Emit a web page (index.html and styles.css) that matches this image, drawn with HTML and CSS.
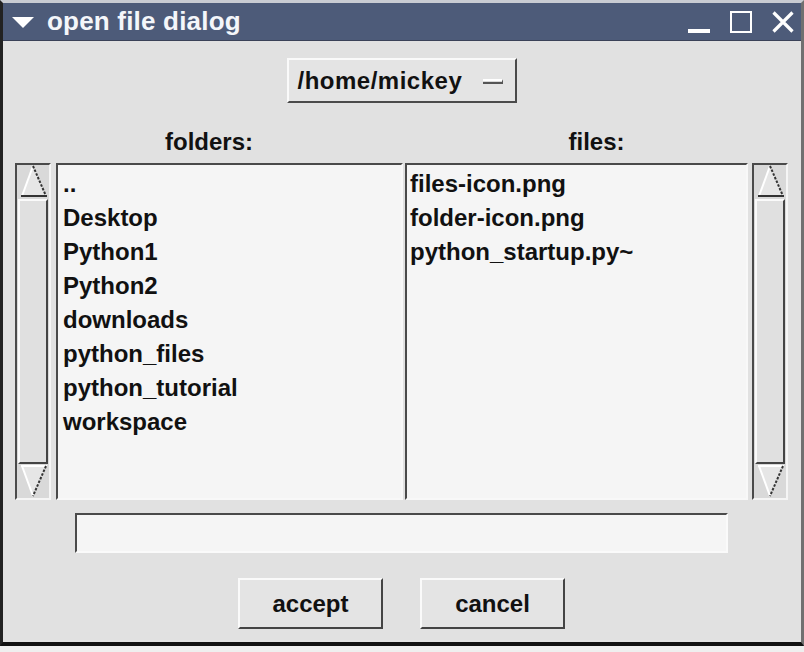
FILE: index.html
```html
<!DOCTYPE html>
<html lang="en">
  <head>
    <meta charset="UTF-8" />
    <title>open file dialog</title>
    <link rel="stylesheet" href="styles.css">
  </head>
  <body>
    <div class="window">
      <div class="titlebar">
        <svg class="menu-tri" width="22" height="12" viewBox="0 0 22 12">
          <polygon points="0,0 22,0 11,11" fill="#fff" />
        </svg>
        <div class="title">open file dialog</div>
        <div class="wbtns">
          <svg width="22" height="22" viewBox="0 0 22 22">
            <rect x="0" y="18" width="22" height="4" fill="#fff" />
          </svg>
          <svg width="22" height="22" viewBox="0 0 22 22">
            <rect x="1" y="1" width="20" height="20" fill="none" stroke="#fff" stroke-width="2" />
          </svg>
          <svg width="22" height="22" viewBox="0 0 22 22">
            <path d="M1.5 1.5 L20.5 20.5 M20.5 1.5 L1.5 20.5" stroke="#fff" stroke-width="3.2" />
          </svg>
        </div>
      </div>

      <div class="content">
        <div class="dropdown">
          <span class="path">/home/mickey</span>
          <span class="indicator"></span>
        </div>

        <div class="cols">
          <div class="label">folders:</div>
          <div class="label">files:</div>

          <div class="pane">
            <div class="scrollbar">
              <svg class="arrow" width="32" height="34" viewBox="0 0 32 34">
                <polygon points="16,1 5,31 29,31" fill="#e6e6e6" />
                <line x1="16" y1="1" x2="5" y2="31" stroke="#fff" stroke-width="2" />
                <line x1="16" y1="1" x2="29" y2="31" stroke="#333" stroke-width="2" stroke-dasharray="2.5 1.5" />
                <line x1="4" y1="31" x2="30" y2="31" stroke="#333" stroke-width="2" />
              </svg>
              <div class="thumb"></div>
              <svg class="arrow" width="32" height="34" viewBox="0 0 32 34">
                <polygon points="5,2 29,2 16,32" fill="#e6e6e6" />
                <line x1="4" y1="2" x2="30" y2="2" stroke="#fff" stroke-width="2" />
                <line x1="5" y1="2" x2="16" y2="32" stroke="#fff" stroke-width="2" />
                <line x1="29" y1="2" x2="16" y2="32" stroke="#333" stroke-width="2" stroke-dasharray="2.5 1.5" />
              </svg>
            </div>
            <div class="listbox">
              <div class="item">..</div>
              <div class="item">Desktop</div>
              <div class="item">Python1</div>
              <div class="item">Python2</div>
              <div class="item">downloads</div>
              <div class="item">python_files</div>
              <div class="item">python_tutorial</div>
              <div class="item">workspace</div>
            </div>
          </div>

          <div class="pane right">
            <div class="listbox">
              <div class="item">files-icon.png</div>
              <div class="item">folder-icon.png</div>
              <div class="item">python_startup.py~</div>
            </div>
            <div class="scrollbar">
              <svg class="arrow" width="32" height="34" viewBox="0 0 32 34">
                <polygon points="16,1 5,31 29,31" fill="#e6e6e6" />
                <line x1="16" y1="1" x2="5" y2="31" stroke="#fff" stroke-width="2" />
                <line x1="16" y1="1" x2="29" y2="31" stroke="#333" stroke-width="2" stroke-dasharray="2.5 1.5" />
                <line x1="4" y1="31" x2="30" y2="31" stroke="#333" stroke-width="2" />
              </svg>
              <div class="thumb"></div>
              <svg class="arrow" width="32" height="34" viewBox="0 0 32 34">
                <polygon points="5,2 29,2 16,32" fill="#e6e6e6" />
                <line x1="4" y1="2" x2="30" y2="2" stroke="#fff" stroke-width="2" />
                <line x1="5" y1="2" x2="16" y2="32" stroke="#fff" stroke-width="2" />
                <line x1="29" y1="2" x2="16" y2="32" stroke="#333" stroke-width="2" stroke-dasharray="2.5 1.5" />
              </svg>
            </div>
          </div>
        </div>

        <div class="entry"></div>

        <div class="buttons">
          <div class="btn">accept</div>
          <div class="btn">cancel</div>
        </div>
      </div>
    </div>
  </body>
</html>
```

FILE: styles.css
```css
* {
  margin: 0;
  padding: 0;
  box-sizing: border-box;
}

body {
  background: #efefef;
  font-family: "Liberation Sans", Arial, sans-serif;
  font-weight: bold;
  font-size: 24px;
  color: #111;
}

.window {
  width: 804px;
  height: 646px;
  border-top: 3px solid #c9ccd3;
  border-left: 3px solid #222;
  border-right: 3px solid #707070;
  border-bottom: 4px solid #111;
  background: #e1e1e1;
}

/* title bar */
.titlebar {
  height: 38px;
  background: #4d5b79;
  border-bottom: 1px solid #3a4258;
  display: flex;
  align-items: center;
  color: #fff;
}

.menu-tri {
  margin-left: 9px;
  margin-top: 2px;
}

.title {
  margin-left: 13px;
  font-size: 26px;
  letter-spacing: 0.2px;
  color: #f4f6fa;
}

.wbtns {
  margin-left: auto;
  margin-right: 7px;
  display: flex;
  gap: 20px;
  margin-top: 1px;
}

/* main area */
.content {
  height: 601px;
  padding: 17px 13px 0 12px;
  display: flex;
  flex-direction: column;
  align-items: center;
}

.dropdown {
  width: 230px;
  height: 45px;
  border: 2px solid;
  border-color: #fafafa #4a4a4a #4a4a4a #fafafa;
  background: #e4e4e4;
  display: flex;
  align-items: center;
  padding-left: 9px;
}

.dropdown .path {
  letter-spacing: 0.5px;
}

.dropdown .indicator {
  width: 20px;
  height: 5px;
  margin-left: 21px;
  margin-top: 2px;
  border-top: 2px solid #fff;
  border-bottom: 2px solid #555;
  border-right: 1px solid #555;
  background: #d8d8d8;
}

.cols {
  margin-top: 23px;
  display: grid;
  grid-template-columns: 388px 383px;
  column-gap: 2px;
}

.label {
  text-align: center;
  line-height: 32px;
  height: 37px;
}

.pane {
  display: flex;
  gap: 5px;
  height: 337px;
}

.pane.right {
  gap: 4px;
}

.scrollbar {
  width: 36px;
  flex-shrink: 0;
  border: 2px solid;
  border-color: #4a4a4a #f5f5f5 #f5f5f5 #4a4a4a;
  background: #d9d9d9;
  display: flex;
  flex-direction: column;
}

.scrollbar .arrow {
  display: block;
  flex-shrink: 0;
}

.scrollbar .thumb {
  flex: 1;
  border: 2px solid;
  border-color: #fafafa #444 #444 #fafafa;
  background: #e0e0e0;
  margin: 0 1px;
}

.listbox {
  flex: 1;
  border: 2px solid;
  border-color: #4a4a4a #f8f8f8 #f8f8f8 #4a4a4a;
  background: #f5f5f5;
  padding: 2px 0 0 5px;
}

.pane.right .listbox {
  padding-left: 3px;
}

.item {
  line-height: 34px;
  height: 34px;
  white-space: nowrap;
}

.entry {
  margin-top: 13px;
  width: 653px;
  height: 40px;
  border: 2px solid;
  border-color: #4a4a4a #fafafa #fafafa #4a4a4a;
  background: #f5f5f5;
}

.buttons {
  margin-top: 25px;
  display: flex;
  gap: 37px;
}

.btn {
  width: 145px;
  height: 51px;
  border: 2px solid;
  border-color: #fafafa #444 #444 #fafafa;
  background: #e4e4e4;
  display: flex;
  align-items: center;
  justify-content: center;
}
```
